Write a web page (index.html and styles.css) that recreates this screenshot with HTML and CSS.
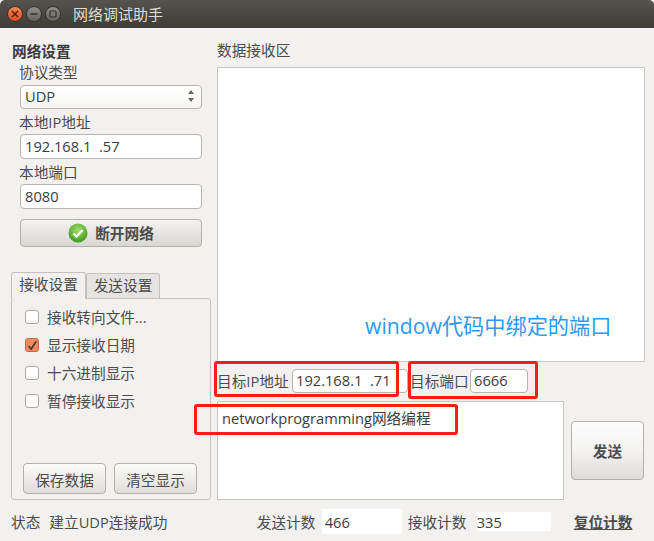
FILE: index.html
```html
<!DOCTYPE html>
<html lang="zh-CN">
<head>
    <meta charset="UTF-8">
    <meta name="viewport" content="width=device-width, initial-scale=1.0">
    <title>网络调试助手</title>
    <link rel="stylesheet" href="styles.css">
</head>
<body>
    <div class="window">
        <header class="titlebar">
            <div class="win-buttons">
                <span class="win-btn close"><svg width="8" height="8" viewBox="0 0 8 8"><path d="M1 1l6 6M7 1l-6 6" stroke="#5a1d08" stroke-width="1.5"/></svg></span>
                <span class="win-btn"><svg width="8" height="8" viewBox="0 0 8 8"><path d="M0.5 4h7" stroke="#33322d" stroke-width="1.5"/></svg></span>
                <span class="win-btn"><svg width="8" height="8" viewBox="0 0 8 8"><rect x="1" y="1" width="6" height="6" rx="1" fill="none" stroke="#33322d" stroke-width="1.2"/></svg></span>
            </div>
            <span class="win-title">网络调试助手</span>
        </header>

        <div class="content">
            <aside class="left">
                <h1 class="group-title">网络设置</h1>
                <div class="settings">
                    <label class="field-label">协议类型</label>
                    <div class="select">
                        <span>UDP</span>
                        <svg width="8" height="14" viewBox="0 0 8 14"><path d="M4 1l3 4H1zM4 13l3-4H1z" fill="#6a6862"/></svg>
                    </div>
                    <label class="field-label gap-a">本地IP地址</label>
                    <div class="input">192.168.1&nbsp; .57</div>
                    <label class="field-label gap-b">本地端口</label>
                    <div class="input">8080</div>
                    <button class="btn connect">
                        <svg width="20" height="20" viewBox="0 0 20 20">
                            <defs>
                                <radialGradient id="ok" cx="50%" cy="35%" r="65%">
                                    <stop offset="0" stop-color="#a6de6a"/>
                                    <stop offset="1" stop-color="#3c9a1e"/>
                                </radialGradient>
                            </defs>
                            <circle cx="10" cy="10" r="9.500" fill="url(#ok)"/>
                            <path d="M5.500 10.500l3 3 6-6.500" fill="none" stroke="#fff" stroke-width="2.400"/>
                        </svg>
                        <span>断开网络</span>
                    </button>
                </div>

                <div class="tabs">
                    <span class="tab active">接收设置</span>
                    <span class="tab">发送设置</span>
                </div>
                <div class="tab-panel">
                    <div class="checks">
                        <div class="check"><span class="box"></span>接收转向文件...</div>
                        <div class="check"><span class="box on"><svg width="14" height="14" viewBox="0 0 14 14"><path d="M3 7l3 3.500L12 1.500" fill="none" stroke="#4a3a30" stroke-width="2"/></svg></span>显示接收日期</div>
                        <div class="check"><span class="box"></span>十六进制显示</div>
                        <div class="check"><span class="box"></span>暂停接收显示</div>
                    </div>
                    <div class="panel-actions">
                        <button class="btn small">保存数据</button>
                        <button class="btn small">清空显示</button>
                    </div>
                </div>
            </aside>

            <main class="right">
                <div class="recv-title">数据接收区</div>
                <div class="recv-box"></div>
                <div class="target-row">
                    <span class="ip-label">目标IP地址</span>
                    <div class="input target-ip">192.168.1&nbsp; .71</div>
                    <span class="port-label">目标端口</span>
                    <div class="input target-port">6666</div>
                </div>
                <div class="send-row">
                    <div class="send-box">networkprogramming网络编程</div>
                    <button class="btn send">发送</button>
                </div>
            </main>
        </div>

        <footer class="statusbar">
            <span class="status-key">状态</span>
            <span class="status-text">建立UDP连接成功</span>
            <span class="count-label">发送计数</span>
            <span class="count sent">466</span>
            <span class="count-label recv">接收计数</span>
            <span class="count got">335</span>
            <span class="reset">复位计数</span>
        </footer>

        <!-- annotations drawn over the screenshot -->
        <div class="note note-ip"></div>
        <div class="note note-port"></div>
        <div class="note note-msg"></div>
        <div class="note-text">window代码中绑定的端口</div>
    </div>
</body>
</html>
```

FILE: styles.css
```css
* {
    box-sizing: border-box;
}
body {
    margin: 0;
    background-color: #f2f1f0;
}
.window {
    position: relative;
    width: 654px;
    height: 541px;
    overflow: hidden;
    font-family: "Open Sans", "Noto Sans CJK SC", sans-serif;
    font-size: 14.67px;
    line-height: 20px;
    color: #4c4c4c;
    background-color: #f2f1f0;
}
.titlebar {
    display: flex;
    align-items: center;
    height: 28px;
    padding-left: 7px;
    background: linear-gradient(#55534c, #3d3c37);
    border-radius: 5px 5px 0 0;
}
.win-buttons {
    display: flex;
    gap: 3px;
}
.win-btn {
    display: flex;
    align-items: center;
    justify-content: center;
    width: 16px;
    height: 16px;
    border-radius: 50%;
    background: linear-gradient(#8f8e87, #63625b);
    border: 1px solid #35342f;
}
.win-btn.close {
    background: linear-gradient(#f6875a, #de4a1c);
}
.win-title {
    margin-left: 12px;
    color: #dfdbd2;
    font-size: 15px;
}
.content {
    display: flex;
    height: 476px;
}
.left {
    width: 217px;
    flex: none;
    padding-top: 13px;
}
.group-title {
    margin: 0 0 1px 12px;
    font-size: 14.67px;
    line-height: 20px;
    font-weight: bold;
    color: #3c3c3c;
}
.settings {
    display: flex;
    flex-direction: column;
    width: 182px;
    margin-left: 20px;
}
.field-label {
    height: 20px;
    margin-left: -1px;
}
.gap-a {
    margin-top: 3px;
}
.gap-b {
    margin-top: 3px;
}
.select,
.input {
    display: flex;
    align-items: center;
    height: 25px;
    padding: 0 4px 2px;
    background-color: #fff;
    border: 1px solid #b8b5b0;
    border-radius: 4px;
    color: #3c3c3c;
    white-space: nowrap;
}
.select {
    justify-content: space-between;
    height: 24px;
    margin-top: 3px;
    padding-right: 6px;
    background: linear-gradient(#fff, #f6f5f4);
}
.input {
    margin-top: 2px;
}
.btn {
    font-family: inherit;
    font-size: 14.67px;
    color: #4c4c4c;
    border: 1px solid #b3b0aa;
    border-radius: 4px;
    background: linear-gradient(#fbfbfa, #e0dedb);
    padding: 0;
}
.connect {
    display: flex;
    align-items: center;
    justify-content: center;
    gap: 7px;
    height: 28px;
    margin-top: 10px;
    padding-bottom: 1px;
    font-weight: bold;
    background: linear-gradient(#f3f2f1, #d9d7d3);
}
.tabs {
    display: flex;
    height: 26px;
    margin: 25px 0 0 11px;
    position: relative;
    z-index: 1;
}
.tab {
    width: 74px;
    height: 25px;
    margin-top: 1px;
    text-align: center;
    line-height: 23px;
    background-color: #e6e4e2;
    border: 1px solid #c4c1bc;
    border-bottom: none;
    border-radius: 3px 3px 0 0;
}
.tab.active {
    width: 75px;
    height: 27px;
    margin-top: 0;
    line-height: 23px;
    background-color: #f2f1f0;
}
.tab-panel {
    display: flex;
    flex-direction: column;
    justify-content: space-between;
    width: 200px;
    height: 202px;
    margin-left: 11px;
    padding: 4px 13px 5px 11px;
    border: 1px solid #c4c1bc;
    border-radius: 3px;
}
.checks {
    display: flex;
    flex-direction: column;
}
.check {
    display: flex;
    align-items: center;
    gap: 8px;
    height: 28px;
    padding-left: 2px;
    white-space: nowrap;
}
.box {
    display: flex;
    width: 14px;
    height: 14px;
    background-color: #fff;
    border: 1px solid #a9a6a0;
    border-radius: 3px;
}
.box.on {
    background-color: #ee8a5e;
    border-color: #c8683c;
}
.panel-actions {
    display: flex;
    justify-content: space-between;
}
.small {
    width: 83px;
    height: 31px;
    padding-top: 1px;
}
.right {
    flex: 1;
    padding-top: 12px;
}
.recv-title {
    height: 20px;
}
.recv-box {
    width: 428px;
    height: 295px;
    margin-top: 7px;
    background-color: #fff;
    border: 1px solid #c9c7c3;
}
.target-row {
    display: flex;
    align-items: center;
    height: 24px;
    margin-top: 7px;
    white-space: nowrap;
}
.target-row .input {
    margin-top: 0;
    height: 24px;
    padding-left: 3px;
}
.ip-label {
    width: 75px;
}
.target-ip {
    width: 116px;
}
.port-label {
    width: 60px;
    margin-left: 2px;
}
.target-port {
    width: 58px;
}
.send-row {
    display: flex;
    margin-top: 8px;
}
.send-box {
    width: 347px;
    height: 99px;
    padding: 6px 4px;
    background-color: #fff;
    border: 1px solid #c9c7c3;
    color: #3c3c3c;
}
.send {
    width: 73px;
    height: 59px;
    margin: 20px 0 0 7px;
    padding-bottom: 1px;
    font-weight: bold;
    background: linear-gradient(#fdfdfd, #f4f3f2 50%, #dddbd8);
}
.statusbar {
    display: flex;
    align-items: center;
    height: 35px;
    padding-left: 11px;
    white-space: nowrap;
}
.status-text {
    margin-left: 9px;
    width: 207.4px;
}
.count {
    display: flex;
    align-items: center;
    padding-left: 3px;
    background-color: #fff;
    color: #3c3c3c;
}
.count-label {
    width: 59px;
}
.sent {
    width: 80px;
    height: 25px;
    margin-left: 6px;
}
.got {
    width: 74px;
    height: 19px;
    margin-left: 10px;
    padding-left: 0;
}
.count-label.recv {
    margin-left: 6px;
}
.reset {
    margin-left: 23px;
    font-weight: bold;
    text-decoration: underline;
}
.note {
    position: absolute;
    border: 3px solid #fb1d14;
    border-radius: 3px;
}
.note-ip {
    left: 214px;
    top: 361px;
    width: 185px;
    height: 36px;
}
.note-port {
    left: 408px;
    top: 361px;
    width: 130px;
    height: 38px;
}
.note-msg {
    left: 194px;
    top: 404px;
    width: 264px;
    height: 31px;
}
.note-text {
    position: absolute;
    left: 365px;
    top: 312px;
    font-size: 21.2px;
    line-height: 28px;
    color: #2a9af5;
}
```
